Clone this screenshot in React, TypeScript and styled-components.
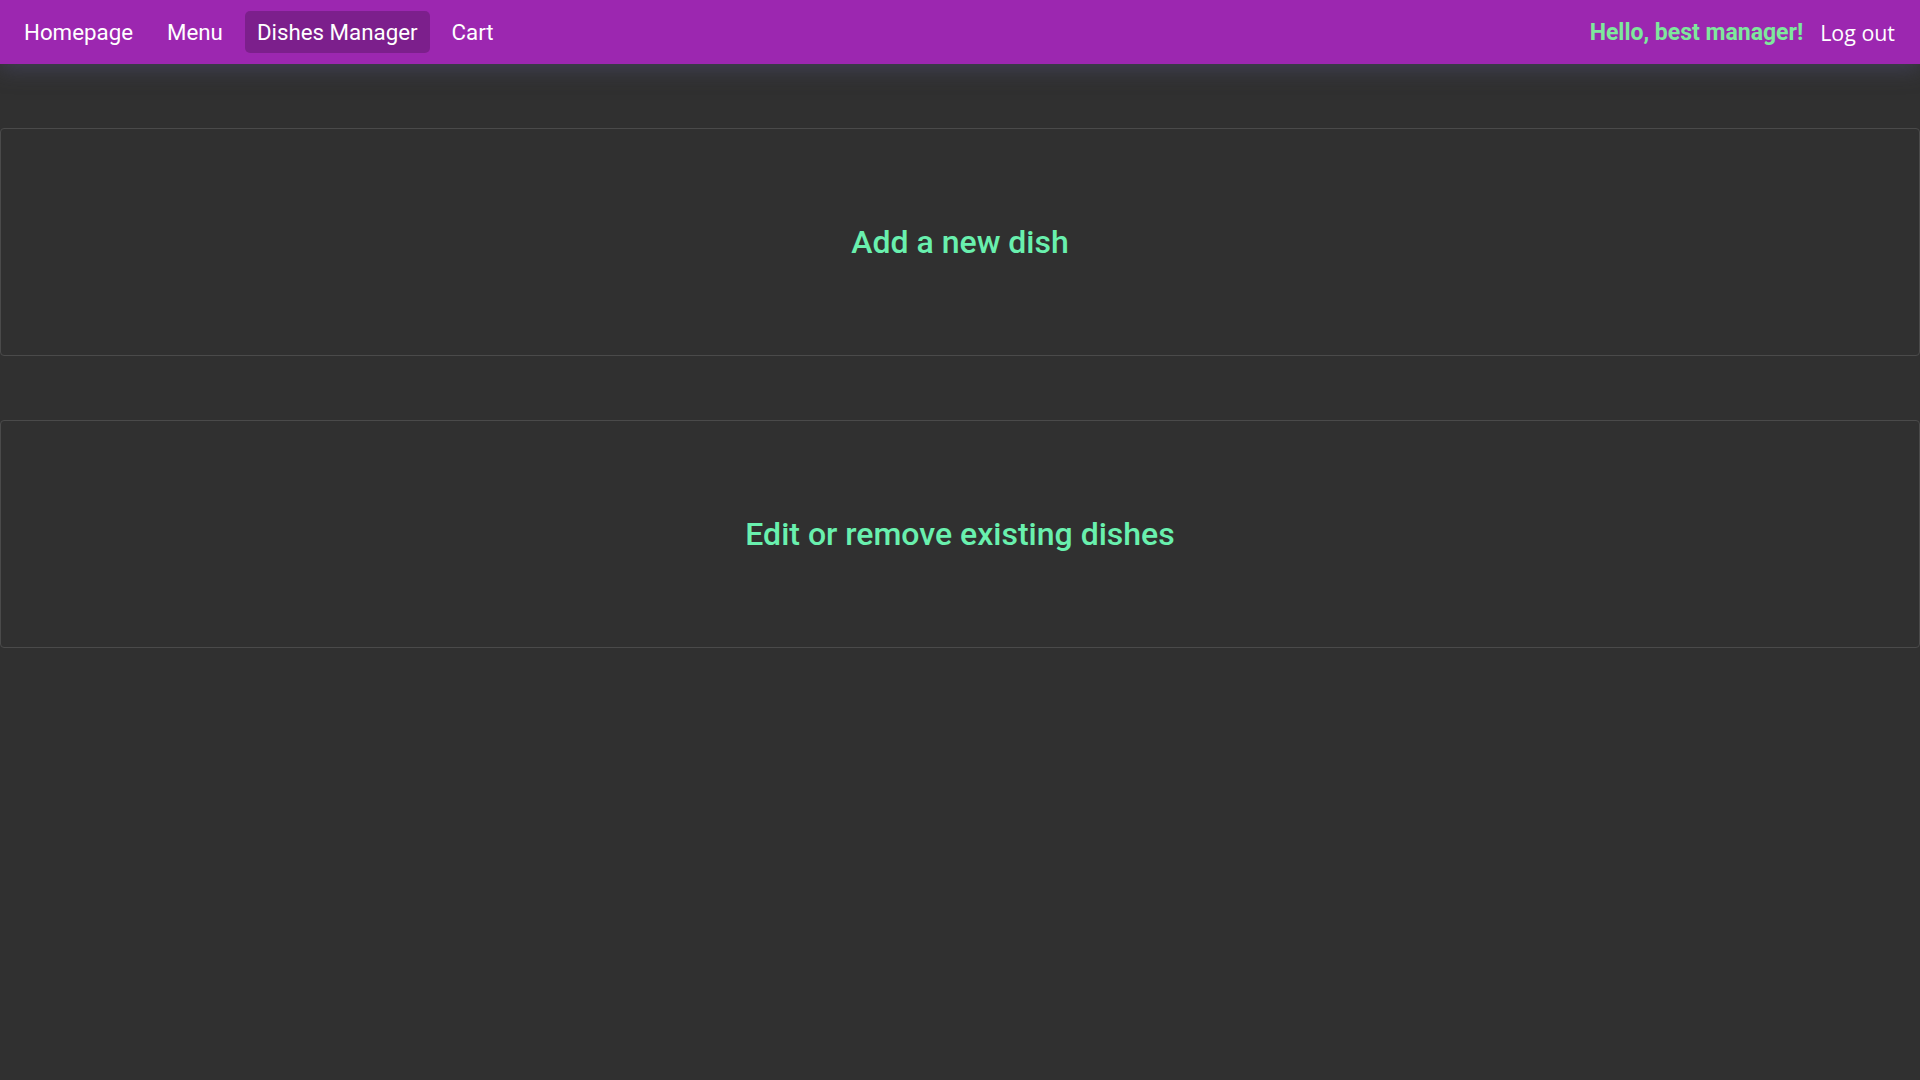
import React from "react";
import styled, { createGlobalStyle } from "styled-components";

const GlobalStyle = createGlobalStyle`
  html, body {
    margin: 0;
    padding: 0;
    background: #303030;
    font-family: Roboto, "Liberation Sans", sans-serif;
  }
  * { box-sizing: border-box; }
`;

const Page = styled.div`
  min-height: 100vh;
  background: #303030;
`;

const NavBar = styled.nav`
  height: 64px;
  background: #9c27b0;
  display: flex;
  align-items: center;
  justify-content: space-between;
  padding: 0 17px 0 12px;
  box-shadow: 0 4px 22px rgba(80, 80, 120, 0.55);
  position: relative;
  z-index: 1;
`;

const NavGroup = styled.div<{ $gap: number }>`
  display: flex;
  align-items: center;
  gap: ${(p) => p.$gap}px;
`;

const NavLink = styled.a<{ $active?: boolean }>`
  display: flex;
  align-items: center;
  height: 42px;
  padding: 0 12px;
  border-radius: 5px;
  color: #ffffff;
  font-family: Roboto, sans-serif;
  font-size: 22.3px;
  font-weight: 400;
  text-decoration: none;
  background: ${(p) => (p.$active ? "rgba(0, 0, 0, 0.2)" : "transparent")};
  cursor: pointer;
`;

const Greeting = styled.span`
  color: #7ee89c;
  font-family: Roboto, sans-serif;
  font-weight: 700;
  font-size: 23px;
`;

const LogoutButton = styled.button`
  background: transparent;
  border: none;
  color: #ffffff;
  font-family: "Open Sans", "Noto Sans", sans-serif;
  font-size: 21.4px;
  padding: 0 8px;
  height: 42px;
  cursor: pointer;
`;

const Content = styled.main`
  display: flex;
  flex-direction: column;
  gap: 64px;
  padding-top: 64px;
`;

const Card = styled.a`
  height: 228px;
  border: 1px solid #4a4a4a;
  border-radius: 4px;
  display: flex;
  align-items: center;
  justify-content: center;
  text-decoration: none;
  background: #303030;
  cursor: pointer;
`;

const CardTitle = styled.h2`
  margin: 0;
  color: #69f0ae;
  font-family: Roboto, sans-serif;
  font-weight: 500;
  font-size: 32px;
`;

export default function App() {
  return (
    <Page>
      <GlobalStyle />
      <NavBar>
        <NavGroup $gap={10}>
          <NavLink>Homepage</NavLink>
          <NavLink>Menu</NavLink>
          <NavLink $active>Dishes Manager</NavLink>
          <NavLink>Cart</NavLink>
        </NavGroup>
        <NavGroup $gap={9}>
          <Greeting>Hello, best manager!</Greeting>
          <LogoutButton>Log out</LogoutButton>
        </NavGroup>
      </NavBar>
      <Content>
        <Card>
          <CardTitle>Add a new dish</CardTitle>
        </Card>
        <Card>
          <CardTitle>Edit or remove existing dishes</CardTitle>
        </Card>
      </Content>
    </Page>
  );
}
